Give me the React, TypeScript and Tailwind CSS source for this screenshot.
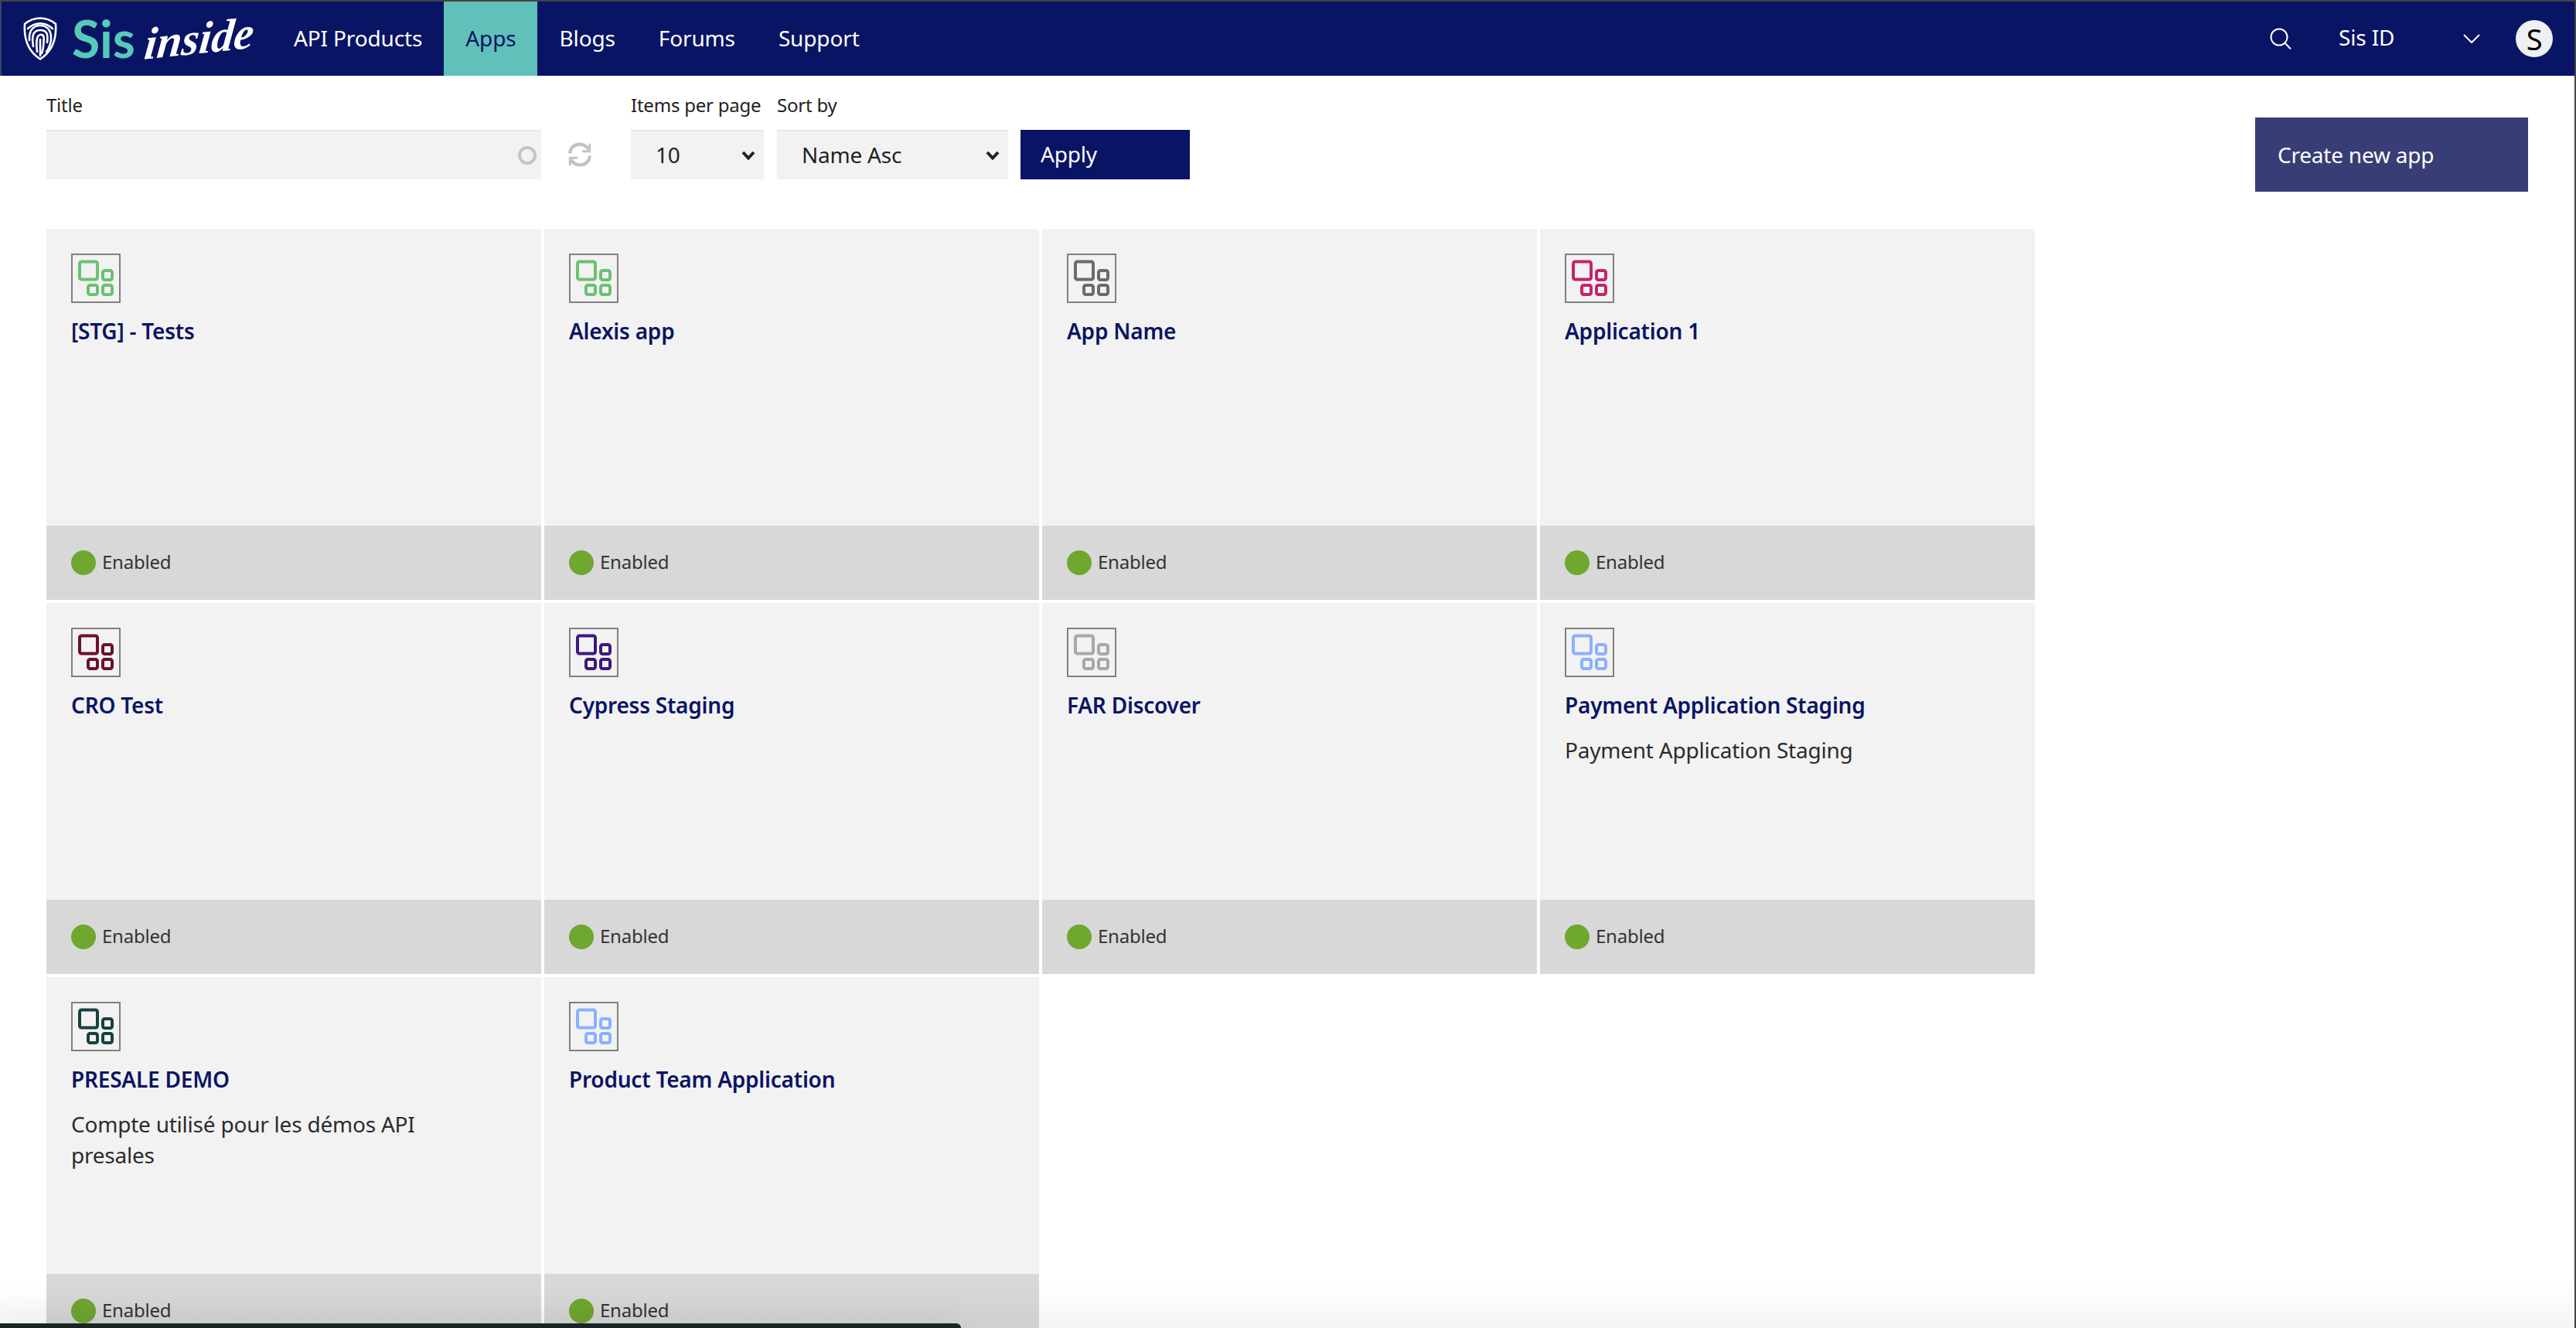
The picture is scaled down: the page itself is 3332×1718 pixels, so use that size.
const navy = "bg-[#0a1464]";

const apps = [
  { name: "[STG] - Tests", color: "#6cc172" },
  { name: "Alexis app", color: "#6cc172" },
  { name: "App Name", color: "#6b6b6b" },
  { name: "Application 1", color: "#c4246a" },
  { name: "CRO Test", color: "#6a1030" },
  { name: "Cypress Staging", color: "#3c1a78" },
  { name: "FAR Discover", color: "#a8a8a8" },
  { name: "Payment Application Staging", color: "#8ab0ff", desc: "Payment Application Staging" },
  { name: "PRESALE DEMO", color: "#17423f", desc: "Compte utilisé pour les démos API presales" },
  { name: "Product Team Application", color: "#8ab0ff" },
];

function AppIcon({ color }: { color: string }) {
  return (
    <div className="w-16 h-16 border-2 border-[#808080]">
      <svg width="60" height="60" viewBox="0 0 60 60" fill="none" stroke={color} strokeWidth="4">
        <rect x="9" y="8.5" width="23" height="23" rx="2.5" />
        <rect x="39" y="20" width="12" height="12" rx="2.5" />
        <rect x="20" y="39" width="12" height="12" rx="2.5" />
        <rect x="39" y="39" width="12" height="12" rx="2.5" />
      </svg>
    </div>
  );
}

function AppCard({ name, color, desc }: { name: string; color: string; desc?: string }) {
  return (
    <div className="h-[480px] flex flex-col bg-[#f2f2f2]">
      <div className="h-[384px] p-8">
        <AppIcon color={color} />
        <h3 className="mt-[18px] text-[28px] leading-[36px] font-semibold text-[#0a1464]">{name}</h3>
        {desc && <p className="mt-[20px] max-w-[520px] text-[28px] leading-[40px] text-[#2b2b2b]">{desc}</p>}
      </div>
      <div className="h-24 flex items-center gap-2 px-8 bg-[#d8d8d8]">
        <span className="w-8 h-8 rounded-full bg-[#6fa72f]" />
        <span className="pb-[2px] text-2xl text-[#333]">Enabled</span>
      </div>
    </div>
  );
}

function Logo() {
  return (
    <div className="w-[350px] h-full flex items-center pl-[28px]">
      <svg width="44" height="56" viewBox="0 0 44 56" fill="none" stroke="white" strokeWidth="2.6" strokeLinecap="round">
        <path d="M2 9C8 4 15 1.5 22 1.5S36 4 42 9C43 24 40 43 22 54.500C4 43 1 24 2 9Z" />
        <path d="M6 15C16 6 28 6 38 15" />
        <path d="M8 30C7 15 15 11 22 11S37 15 36 30C35 36 33 41 30 45" />
        <path d="M13 38C11 26 12 17 22 17S32 24 31 33" />
        <path d="M18 45C17 36 16 24 22 23S27 28 26 38C26 41 25 44 24 47" />
        <path d="M22 29V50" />
      </svg>
      <span className="ml-[19px] text-[66px] leading-none font-bold tracking-normal text-[#57c9b8] font-['Lato',sans-serif]">Sis</span>
      <span className="ml-[12px] -rotate-6 -skew-x-12 text-[58px] leading-none font-bold italic tracking-normal text-white font-['Liberation_Serif',serif]">inside</span>
    </div>
  );
}

function Nav() {
  return (
    <nav className={`h-[98px] flex items-center border-t-2 border-l-2 border-t-[#444] border-l-[#3d4464] ${navy} text-white text-[28px] tracking-[-0.005em]`}>
      <Logo />
      <a className="h-full flex items-center px-7 pb-[2px]">API Products</a>
      <a className="h-full flex items-center px-7 pb-[2px] bg-[#5fc1b9] text-[#0a1464]">Apps</a>
      <a className="h-full flex items-center px-7 pb-[2px]">Blogs</a>
      <a className="h-full flex items-center px-7 pb-[2px]">Forums</a>
      <a className="h-full flex items-center px-7 pb-[2px]">Support</a>
      <div className="ml-auto flex items-center pr-[28px]">
        <svg width="28" height="28" viewBox="0 0 28 28" fill="none" stroke="white" strokeWidth="2">
          <circle cx="12" cy="12" r="10.5" />
          <path d="M19.5 19.5L27 27.5" />
        </svg>
        <span className="ml-[61px] w-[161px] -mt-1">Sis ID</span>
        <svg width="22" height="12" viewBox="0 0 22 12" fill="none" stroke="white" strokeWidth="2">
          <path d="M1 1L11 11L21 1" />
        </svg>
        <span className="ml-[46px] w-12 h-12 rounded-full bg-[#eff0f1] text-black text-[38px] leading-none flex items-center justify-center">S</span>
      </div>
    </nav>
  );
}

function SelectBox({ value, className }: { value: string; className: string }) {
  return (
    <div className={`h-16 flex items-center justify-between bg-[#f2f2f2] border-t-2 border-[#e6e6e6] text-[28px] text-[#222] ${className}`}>
      <span className="pb-[2px]">{value}</span>
      <svg width="18" height="12" viewBox="0 0 18 12" fill="none" stroke="#222" strokeWidth="4">
        <path d="M2 2L9 9.5L16 2" />
      </svg>
    </div>
  );
}

function Filters() {
  return (
    <div className="flex justify-between items-start pl-[60px] pr-[60px]">
      <div className="flex items-end pt-[28px]">
        <div className="w-[640px]">
          <label className="block h-[42px] text-2xl leading-[20px] text-[#222]">Title</label>
          <div className="h-16 flex items-center justify-end pr-[6px] bg-[#f2f2f2] border-t-2 border-[#e6e6e6]">
            <span className="w-6 h-6 rounded-full border-4 border-[#c4c4c4]" />
          </div>
        </div>
        <svg className="ml-[33px] mb-[15px]" width="34" height="34" viewBox="0 0 24 24" fill="none" stroke="#c2c2c2" strokeWidth="3">
          <path d="M3 11C3 6 7 2.5 12 2.5C15.500 2.500 18 4.500 20 7" />
          <path d="M21 2V9H14" strokeWidth="2" />
          <path d="M21 13C21 18 17 21.500 12 21.500C8.500 21.500 6 19.500 4 17" />
          <path d="M3 22V15H10" strokeWidth="2" />
        </svg>
        <div className="ml-[49px] w-[172px]">
          <label className="block h-[42px] text-2xl leading-[20px] whitespace-nowrap text-[#222]">Items per page</label>
          <SelectBox value="10" className="pl-8 pr-[11px]" />
        </div>
        <div className="ml-[17px] w-[299px]">
          <label className="block h-[42px] text-2xl leading-[20px] text-[#222]">Sort by</label>
          <SelectBox value="Name Asc" className="pl-8 pr-[11px]" />
        </div>
        <button className={`ml-4 w-[219px] h-16 pl-[26px] pb-[2px] text-left text-[28px] text-white ${navy}`}>Apply</button>
      </div>
      <button className="mt-[54px] w-[353px] h-24 pl-[29px] text-left text-[28px] text-white bg-[#383d75]">Create new app</button>
    </div>
  );
}

export default function App() {
  return (
    <div className="relative h-[1718px] overflow-hidden bg-white font-['Noto_Sans',sans-serif] tracking-[-0.014em] border-r-2 border-r-[#444]">
      <Nav />
      <Filters />
      <div className="mt-[48px] ml-[60px] w-[2572px] grid grid-cols-4 gap-1">
        {apps.map((a) => (
          <AppCard key={a.name} {...a} />
        ))}
      </div>
      <div className="absolute left-0 right-0 bottom-0 h-[60px] bg-gradient-to-b from-transparent to-black/[0.04]" />
      <div className="absolute left-0 bottom-0 w-[1243px] h-[6px] rounded-tr-md bg-[#1a2424] shadow-[0_0_40px_rgba(0,0,0,0.2)]" />
    </div>
  );
}
